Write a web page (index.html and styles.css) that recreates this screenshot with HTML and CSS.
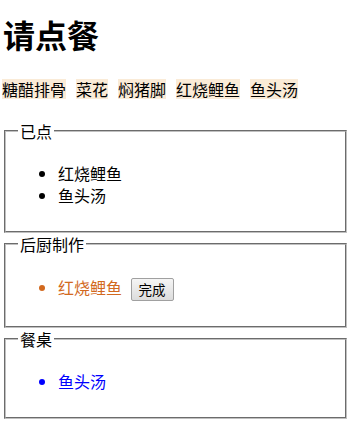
FILE: index.html
```html
<!DOCTYPE html>
<html lang="zh">
<head>
  <meta charset="UTF-8" />
  <title>请点餐</title>
  <link rel="stylesheet" href="styles.css">
</head>
<body>
  <h1 class="title">请点餐</h1>

  <div class="menu">
    <span class="dish">糖醋排骨</span>
    <span class="dish">菜花</span>
    <span class="dish">焖猪脚</span>
    <span class="dish">红烧鲤鱼</span>
    <span class="dish">鱼头汤</span>
  </div>

  <fieldset class="panel">
    <legend>已点</legend>
    <ul class="orders">
      <li>红烧鲤鱼</li>
      <li>鱼头汤</li>
    </ul>
  </fieldset>

  <fieldset class="panel">
    <legend>后厨制作</legend>
    <ul class="kitchen">
      <li>红烧鲤鱼 <button class="done">完成</button></li>
    </ul>
  </fieldset>

  <fieldset class="panel">
    <legend>餐桌</legend>
    <ul class="table">
      <li>鱼头汤</li>
    </ul>
  </fieldset>
</body>
</html>
```

FILE: styles.css
```css
body {
  margin: 0;
  padding: 0 8px 8px 2px;
  font-family: "Microsoft YaHei", "Noto Sans CJK SC", sans-serif;
  font-size: 16px;
  color: #000;
}

.title {
  font-size: 32px;
  font-weight: bold;
  margin: 16px 0 27px 1px;
  line-height: 36px;
}

.menu {
  display: flex;
  gap: 10px;
  margin-bottom: 21px;
}

.dish {
  background: antiquewhite;
  line-height: 20px;
}

.panel {
  margin: 0 2px;
  padding: 5px 12px 10px;
  border: 2px groove #c0c0c0;
}

.panel legend {
  padding: 0 2px;
  line-height: 22px;
}

.panel ul {
  margin: 15px 0;
  padding-left: 40px;
  line-height: 22px;
}

.kitchen {
  color: chocolate;
}

.kitchen li {
  line-height: 25px;
}

.table {
  color: blue;
}

.done {
  font-family: inherit;
  font-size: 13.5px;
  line-height: 17px;
  color: #000;
  margin-left: 5px;
  padding: 2px 7px;
  border: 1px solid #a0a0a0;
  border-radius: 2px;
  background: linear-gradient(#f5f5f5, #dcdcdc);
  vertical-align: middle;
}
```
